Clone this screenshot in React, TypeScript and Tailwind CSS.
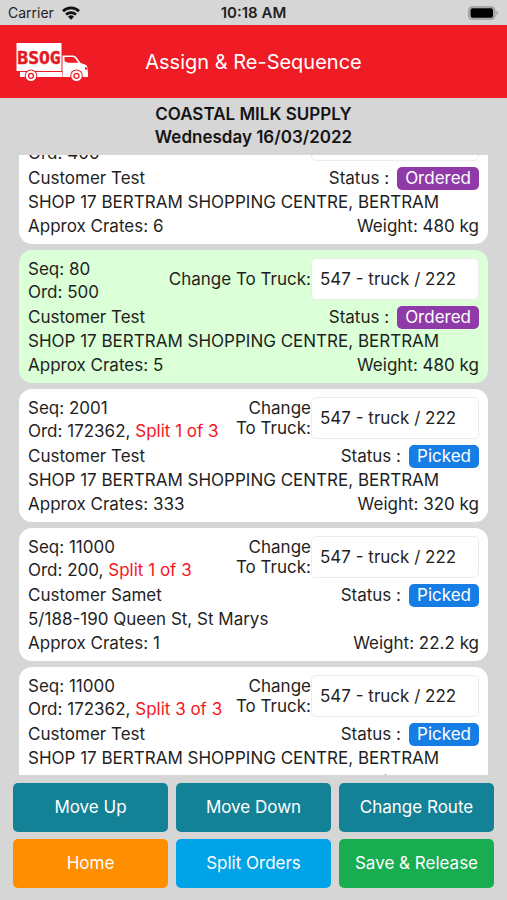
import { useLayoutEffect, useRef } from "react";

type Status = "Ordered" | "Picked";

interface Order {
  seq: number;
  ord: number;
  split?: string;
  customer: string;
  address: string;
  crates: number;
  weight: string;
  status: Status;
  selected?: boolean;
}

const SHOP = "SHOP 17 BERTRAM SHOPPING CENTRE, BERTRAM";

const orders: Order[] = [
  { seq: 70, ord: 400, customer: "Customer Test", address: SHOP, crates: 6, weight: "480 kg", status: "Ordered" },
  { seq: 80, ord: 500, customer: "Customer Test", address: SHOP, crates: 5, weight: "480 kg", status: "Ordered", selected: true },
  { seq: 2001, ord: 172362, split: "Split 1 of 3", customer: "Customer Test", address: SHOP, crates: 333, weight: "320 kg", status: "Picked" },
  { seq: 11000, ord: 200, split: "Split 1 of 3", customer: "Customer Samet", address: "5/188-190 Queen St, St Marys", crates: 1, weight: "22.2 kg", status: "Picked" },
  { seq: 11000, ord: 172362, split: "Split 3 of 3", customer: "Customer Test", address: SHOP, crates: 333, weight: "320 kg", status: "Picked" },
];

const actions = [
  { label: "Move Up", color: "bg-[#148296]" },
  { label: "Move Down", color: "bg-[#148296]" },
  { label: "Change Route", color: "bg-[#148296]" },
  { label: "Home", color: "bg-[#ff8f00]" },
  { label: "Split Orders", color: "bg-[#00a2e8]" },
  { label: "Save & Release", color: "bg-[#18ad51]" },
];

function WifiIcon() {
  return (
    <svg width="18" height="14" viewBox="0 0 18 14" aria-hidden="true">
      <g fill="none" stroke="#111" strokeWidth="2.7">
        <path d="M1 5.2a11.4 11.4 0 0 1 16 0" />
        <path d="M4 8.6a7.2 7.2 0 0 1 10 0" />
      </g>
      <path d="M9 13.800 6 10.8a4.3 4.3 0 0 1 6 0Z" fill="#111" />
    </svg>
  );
}

function BatteryIcon() {
  return (
    <svg width="31" height="14" viewBox="0 0 31 14" aria-hidden="true">
      <rect x="0.8" y="0.8" width="26" height="12.4" rx="3.6" fill="#b4b4b4" stroke="#9b9b9b" strokeWidth="1.3" />
      <rect x="2.6" y="2.3" width="22.4" height="9.4" rx="2" fill="#000" />
      <path d="M28.4 4.8c2 .8 2 3.600 0 4.400Z" fill="#9b9b9b" />
    </svg>
  );
}

function TruckLogo() {
  return (
    <svg width="74" height="40" viewBox="0 0 74 40" role="img" aria-label="BSOG" className="shrink-0">
      <path d="M.5 1h45v28H.5Z" fill="#fff" />
      <path d="M4 30h42v5H4Z" fill="#fff" />
      <path d="M46.500 13.500H57q2 0 3.200 1.600l4.400 5.900 5 1.800q1.600.7 1.800 2.600l.6 5v4.600H46.500Z" fill="#fff" />
      <path d="M48.500 15h8.300q1.200 0 2 1l3.600 4.700H52l-3.500-1.400Z" fill="#ef1c25" />
      <path d="m69 25 1.800.4.4 2.600-2.200-.8Z" fill="#ef1c25" />
      {[15, 60.500].map((cx) => (
        <g key={cx}>
          <circle cx={cx} cy="33.800" r="6.300" fill="#ef1c25" />
          <circle cx={cx} cy="33.800" r="5.300" fill="#fff" />
          <circle cx={cx} cy="33.800" r="2.500" fill="#fff" stroke="#ef1c25" strokeWidth="1.300" />
        </g>
      ))}
      <text
        x="23"
        y="22"
        textAnchor="middle"
        fill="#e01a25"
        stroke="#e01a25"
        strokeWidth="0.500"
        className="font-['DejaVu_Sans_Mono',monospace] text-[18px] font-bold"
      >
        BSOG
      </text>
    </svg>
  );
}

function StatusBadge({ status }: { status: Status }) {
  return (
    <span className={`rounded-[5px] px-2 text-white ${status === "Ordered" ? "bg-[#8f3aa8]" : "bg-[#157de3]"}`}>
      {status}
    </span>
  );
}

function OrderCard({ order, id }: { order: Order; id: string }) {
  return (
    <li
      className={`flex flex-col gap-px rounded-[13px] px-[9px] pt-2 pb-1.5 leading-[23px] ${
        order.selected ? "bg-[#dbffd6]" : "bg-white"
      }`}
    >
      <div className="flex h-[47px] items-start justify-between">
        <div className="whitespace-nowrap">
          <p>Seq: {order.seq}</p>
          <p>
            Ord: {order.ord}
            {order.split && (
              <>
                , <span className="text-[#f5161c]">{order.split}</span>
              </>
            )}
          </p>
        </div>
        <div className="flex items-center">
          <label htmlFor={id} className={`text-right leading-5 ${order.split ? "w-20" : ""}`}>
            Change To Truck:
          </label>
          <select
            id={id}
            className="h-[42px] w-[168px] appearance-none rounded-[5px] border border-[#ececec] bg-white px-2"
          >
            <option>547 - truck / 222</option>
          </select>
        </div>
      </div>
      <div className="flex justify-between">
        <p>{order.customer}</p>
        <p className="flex gap-2">
          <span>Status :</span>
          <StatusBadge status={order.status} />
        </p>
      </div>
      <p className="whitespace-nowrap">{order.address}</p>
      <div className="flex justify-between">
        <p>Approx Crates: {order.crates}</p>
        <p>Weight: {order.weight}</p>
      </div>
    </li>
  );
}

export default function App() {
  const listRef = useRef<HTMLUListElement>(null);

  useLayoutEffect(() => {
    if (listRef.current) listRef.current.scrollTop = 44;
  }, []);

  return (
    <div className="flex h-screen flex-col bg-[#d6d6d6] font-['Inter','Liberation_Sans',sans-serif] text-[17px] text-[#1f1f1f]">
      <div className="grid h-[25px] shrink-0 grid-cols-3 items-center px-2 pt-px">
        <div className="flex items-center gap-2 text-sm">
          <span>Carrier</span>
          <WifiIcon />
        </div>
        <time className="text-center text-[15px] leading-5 font-semibold">10:18 AM</time>
        <div className="flex justify-end">
          <BatteryIcon />
        </div>
      </div>

      <header className="grid h-[73px] shrink-0 grid-cols-[74px_1fr_74px] items-center bg-[#ef1c25] px-4 text-white">
        <TruckLogo />
        <h1 className="text-center text-xl">Assign &amp; Re-Sequence</h1>
      </header>

      <div className="shrink-0 pt-[5px] pb-1.5 text-center leading-[23px] font-semibold text-[#141414]">
        <h2>COASTAL MILK SUPPLY</h2>
        <p>Wednesday 16/03/2022</p>
      </div>

      <ul ref={listRef} className="mx-[19px] flex min-h-0 flex-1 flex-col gap-1.5 overflow-y-auto [scrollbar-width:none]">
        {orders.map((order, i) => (
          <OrderCard key={i} order={order} id={`truck-${i}`} />
        ))}
      </ul>

      <div className="grid shrink-0 grid-cols-3 gap-x-2 gap-y-[7px] px-[13px] pt-2 pb-3">
        {actions.map((action) => (
          <button key={action.label} type="button" className={`h-[49px] rounded-[5px] text-white ${action.color}`}>
            {action.label}
          </button>
        ))}
      </div>
    </div>
  );
}
